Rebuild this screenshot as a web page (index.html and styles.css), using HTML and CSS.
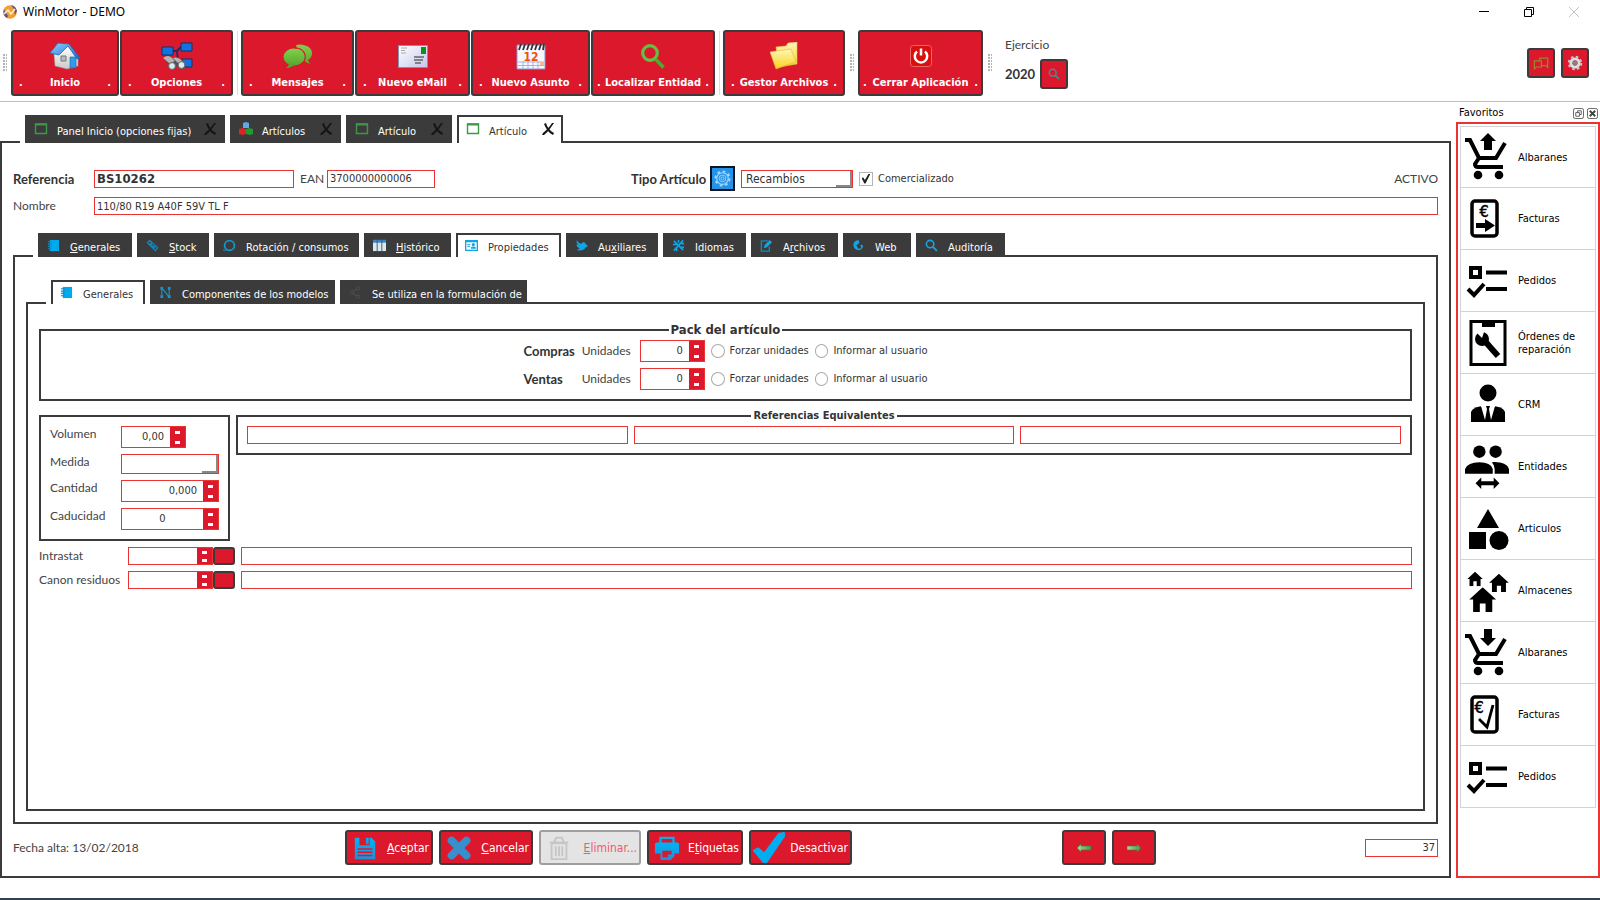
FILE: index.html
```html
<!DOCTYPE html>
<html lang="es">
<head>
<meta charset="utf-8">
<title>WinMotor - DEMO</title>
<link rel="stylesheet" href="styles.css">
</head>
<body>
<svg class="sprite" aria-hidden="true">
  <defs>
    <linearGradient id="g-roof" x1="0" y1="0" x2="1" y2="1"><stop offset="0" stop-color="#8fd0ff"/><stop offset="1" stop-color="#1567c4"/></linearGradient>
    <linearGradient id="g-wall" x1="0" y1="0" x2="0" y2="1"><stop offset="0" stop-color="#ffffff"/><stop offset="1" stop-color="#c9c9c9"/></linearGradient>
    <linearGradient id="g-green" x1="0" y1="0" x2="0" y2="1"><stop offset="0" stop-color="#83cf4c"/><stop offset="1" stop-color="#55a82f"/></linearGradient>
    <linearGradient id="g-folder" x1="0" y1="0" x2="0" y2="1"><stop offset="0" stop-color="#fff6b8"/><stop offset="1" stop-color="#fbd21c"/></linearGradient>
    <linearGradient id="g-mail" x1="0" y1="0" x2="1" y2="1"><stop offset="0" stop-color="#ffffff"/><stop offset="1" stop-color="#c3c6ec"/></linearGradient>
    <linearGradient id="g-blue" x1="0" y1="0" x2="0" y2="1"><stop offset="0" stop-color="#00b4f5"/><stop offset="1" stop-color="#1f8fd8"/></linearGradient>
    <linearGradient id="g-arrow" x1="0" y1="0" x2="1" y2="0"><stop offset="0" stop-color="#a6dc9c"/><stop offset="1" stop-color="#4a9440"/></linearGradient>
    <symbol id="i-window" viewBox="0 0 14 14"><path d="M1.500 2h11v9.500h-11z" fill="none" stroke="#3f9646" stroke-width="1.400"/><path d="M1 1.500h12v2H1z" fill="#3f9646"/></symbol>
    <symbol id="i-x" viewBox="0 0 14 14"><path d="M1 13l1-2C6 8 9 4 11 1h2C10 5 7 10 3 13zM3 2l2-1c1 4 4 8 8 10l-1 2C8 11 5 7 3 2z" fill="#151515"/></symbol>
    <symbol id="i-book" viewBox="0 0 14 14"><path d="M3 1h10v12H3z" fill="#00a8ec"/><path d="M1 3h4M1 5.500h4M1 8h4M1 10.500h4" stroke="#1389bd" stroke-width="1.200"/></symbol>
    <symbol id="i-search" viewBox="0 0 14 14"><circle cx="5.500" cy="5.500" r="4" fill="none" stroke="currentColor" stroke-width="1.700"/><path d="M8.500 8.500l4.300 4.300" stroke="currentColor" stroke-width="2"/></symbol>
    <symbol id="i-cart" viewBox="0 0 44 48"><path d="M0 7h5l9 18h17l9-15" fill="none" stroke="#000" stroke-width="4"/><path d="M14 25l-4 6q0 3 3 3h25" fill="none" stroke="#000" stroke-width="4"/><circle cx="13" cy="42" r="4.300"/><circle cx="34" cy="42" r="4.300"/></symbol>
    <symbol id="i-tasks" viewBox="0 0 44 48"><path d="M6 11h9v9H6z" fill="none" stroke="#000" stroke-width="4"/><path d="M21 15.500h21M21 32h21" stroke="#000" stroke-width="4"/><path d="M3 32l6 6 10-11" fill="none" stroke="#000" stroke-width="4"/></symbol>
    <symbol id="i-house" viewBox="0 0 28 26"><path d="M14 0L28 13h-4v13h-7v-9h-6v9H4V13H0z"/></symbol>
    <symbol id="i-gear" viewBox="0 0 20 20"><circle cx="10" cy="10" r="6.800" fill="none" stroke="currentColor" stroke-width="1.400"/><circle cx="10" cy="10" r="8.400" fill="none" stroke="currentColor" stroke-width="2.200" stroke-dasharray="3.300 3.297"/><circle cx="10" cy="10" r="4" fill="none" stroke="currentColor"/><circle cx="10" cy="10" r="1.800" fill="none" stroke="currentColor"/></symbol>
  </defs>
</svg>

<header class="titlebar">
  <svg class="logo" viewBox="0 0 14 14"><circle cx="7" cy="7" r="6.800" fill="#f0a02c"/><path d="M1 4q-2 6 3 9l1-2-3-5zM8 0q5 1 6 6l-2 4-1-6z" fill="#6a4f86"/><path d="M1 9l4-4 3 4 4-5" fill="none" stroke="#fff1d0" stroke-width="1.500"/></svg>
  <span class="titlebar-text">WinMotor - DEMO</span>
  <div class="winctl">
    <button aria-label="Minimizar"><svg viewBox="0 0 12 12"><path d="M1 5.500h10" stroke="#000"/></svg></button>
    <button aria-label="Restaurar"><svg viewBox="0 0 12 12"><path d="M1.500 3.500h7v7h-7zM3.500 3V1.500h7v7H9" fill="none" stroke="#000"/></svg></button>
    <button aria-label="Cerrar"><svg viewBox="0 0 12 12"><path d="M1 1l10 10M11 1L1 11" stroke="#c4c4c4"/></svg></button>
  </div>
</header>

<nav class="toolbar">
  <span class="grip"></span>
  <button class="tool w-inicio"><svg viewBox="0 0 32 28"><path d="M5 12L19 4l10 12v8l-11 3-12-3z" fill="url(#g-wall)" stroke="#999" stroke-width=".5"/><path d="M1 11L9 1l11 1 11 14-3 1L19 4l-9 9z" fill="url(#g-roof)" stroke="#1d6db8" stroke-width=".8"/><path d="M21 15h6v11h-6z" fill="#2f9bea" stroke="#1567b4" stroke-width=".6"/><path d="M12 14h5v5h-5z" fill="#bbb" stroke="#777"/></svg><span class="tool-label"><i>.</i><b>Inicio</b><i>.</i></span></button>
  <button class="tool w-opciones"><svg viewBox="0 0 32 28"><path d="M10 9h6l5-5M16 9l1 11h6" fill="none" stroke="#232a6b" stroke-width="1.800"/><path d="M1 5h11v8H1zM20 1h11v8H20zM20 17h11v8H20z" fill="#1173e0" stroke="#12306f"/><path d="M2 16q5-4 10 0l10 2q3 4 2 8-3 3-6 0l-2-2q-4 6-8 3l-1-5z" fill="#55504f"/><path d="M2 16q5-4 9 0l3 3-6 2zM12 16q5-2 9 3l-4 2z" fill="#b9b4b2"/><circle cx="11" cy="24" r="3.400" fill="#dceaf2" stroke="#666"/><circle cx="20.500" cy="23" r="3.400" fill="#dceaf2" stroke="#666"/></svg><span class="tool-label"><i>.</i><b>Opciones</b><i>.</i></span></button>
  <span class="sep"></span>
  <button class="tool w-mensajes"><svg viewBox="0 0 32 28"><path d="M20 3c6 0 10 4 10 8 0 3-1 5-4 7l2 4q-4-1-5-3l-4 1z" fill="url(#g-green)"/><path d="M14 3q4-1 8 0v5l-6 2z" fill="#7ecb49"/><ellipse cx="12" cy="15" rx="10.500" ry="8.500" fill="url(#g-green)"/><path d="M7 21q0 3-3 5 5 0 8-3z" fill="#55a82f"/><path d="M13 6c9 0 13 8 8 15" fill="none" stroke="#dc182c" stroke-width="1.200"/></svg><span class="tool-label"><i>.</i><b>Mensajes</b><i>.</i></span></button>
  <button class="tool w-email"><svg viewBox="0 0 32 28"><path d="M1.500 3.500h29v22h-29z" fill="url(#g-mail)" stroke="#888fae"/><path d="M24 5h5v7h-5z" fill="#079518"/><path d="M4 6h6M4 8.500h4M4 11h5" stroke="#aaa"/><path d="M17 15h10M17 18h9M18 21h6" stroke="#666" stroke-width="1.500"/></svg><span class="tool-label"><i>.</i><b>Nuevo eMail</b><i>.</i></span></button>
  <button class="tool w-asunto"><svg viewBox="0 0 32 28"><path d="M2 3h28v24H2z" fill="#f6f8ff" stroke="#8895cf"/><path d="M3 20h26M3 23.500h26M8 19v8M13 19v8M18 19v8M23 19v8" stroke="#a9b2e4"/><path d="M25 20h4v3h-4z" fill="#f7b98f"/><path d="M4 8l2-6M8 8l2-6M12 8l2-6M16 8l2-6M20 8l2-6M24 8l2-6M28 8l1-6" stroke="#333" stroke-width="1.800"/><text x="16" y="18.500" class="cal-num">12</text></svg><span class="tool-label"><i>.</i><b>Nuevo Asunto</b><i>.</i></span></button>
  <button class="tool w-localizar"><svg viewBox="0 0 32 28"><circle cx="13" cy="11" r="7.300" fill="none" stroke="#63c044" stroke-width="3.200"/><path d="M18.500 17l8 8.500" stroke="#55a82f" stroke-width="3.500"/></svg><span class="tool-label"><i>.</i><b>Localizar Entidad</b><i>.</i></span></button>
  <span class="sep"></span>
  <button class="tool w-gestor"><svg viewBox="0 0 32 28"><path d="M8 5l10-1 2-3 9-1v22l-18 3z" fill="url(#g-folder)" stroke="#e0c25a" stroke-width=".6"/><path d="M2 10l6-1 15-2 5 13q-10 3-20 7z" fill="url(#g-folder)" stroke="#dcb83c" stroke-width=".6"/></svg><span class="tool-label"><i>.</i><b>Gestor Archivos</b><i>.</i></span></button>
  <span class="grip"></span>
  <button class="tool w-cerrar"><svg viewBox="0 0 32 28"><rect x="5.500" y="3.500" width="21" height="21" rx="3" fill="#da0f0f" stroke="#f08c84" stroke-width=".7"/><path d="M12 9.500a6.200 6.200 0 1 0 8 0M16 6.500v7" fill="none" stroke="#fff" stroke-width="2.500"/></svg><span class="tool-label"><i>.</i><b>Cerrar Aplicación</b><i>.</i></span></button>
  <span class="grip"></span>
  <div class="ejercicio">
    <span class="lbl">Ejercicio</span>
    <div class="ejercicio-row"><b class="lbl-b">2020</b><button class="mini teal" aria-label="Buscar ejercicio"><svg viewBox="0 0 14 14"><use href="#i-search"/></svg></button></div>
  </div>
  <div class="toolbar-end">
    <button class="mini" aria-label="Ventanas"><svg class="wide" viewBox="0 0 18 16"><path d="M1.500 5.500h8v7h-6l-2 2zM7.500 5V2.500h9V13l-2-2H10" fill="none" stroke="#8f8a2b" stroke-width="1.400"/></svg></button>
    <button class="mini" aria-label="Configuración"><svg class="wide" viewBox="0 0 20 20"><circle cx="10" cy="10" r="5" fill="none" stroke="#dedede" stroke-width="4"/><circle cx="10" cy="10" r="7.800" fill="none" stroke="#c4c8ca" stroke-width="2.500" stroke-dasharray="3.300 2.826"/><circle cx="10" cy="10" r="3" fill="#a8747a" stroke="#777"/></svg></button>
  </div>
</nav>

<div class="workspace">
  <main class="main">
    <div class="tabs tabs-main" role="tablist">
      <button class="tab m1" role="tab"><svg viewBox="0 0 14 14"><use href="#i-window"/></svg><span>Panel Inicio (opciones fijas)</span><svg class="close" viewBox="0 0 14 14"><use href="#i-x"/></svg></button>
      <button class="tab m2" role="tab"><svg viewBox="0 0 14 14"><path d="M4 1l3-1 3 1v5H4z" fill="#5fa9e8"/><path d="M0 7l3-1 4 1v5l-3 1-4-1z" fill="#d92525"/><path d="M7 7l3-1 4 1v5l-3 1-4-1z" fill="#219b2b"/></svg><span>Artículos</span><svg class="close" viewBox="0 0 14 14"><use href="#i-x"/></svg></button>
      <button class="tab m3" role="tab"><svg viewBox="0 0 14 14"><use href="#i-window"/></svg><span>Artículo</span><svg class="close" viewBox="0 0 14 14"><use href="#i-x"/></svg></button>
      <button class="tab m3 active" role="tab" aria-selected="true"><svg viewBox="0 0 14 14"><use href="#i-window"/></svg><span>Artículo</span><svg class="close" viewBox="0 0 14 14"><use href="#i-x"/></svg></button>
    </div>
    <section class="frame frame-main">
      <div class="row-ref">
        <label class="lbl-b col-label" for="ref">Referencia</label>
        <input class="field ref" id="ref" value="BS10262">
        <label class="lbl ean-label" for="ean">EAN</label>
        <input class="field ean" id="ean" value="3700000000006">
        <div class="tipo">
          <label class="lbl-b" for="tipo">Tipo Artículo</label>
          <button class="gear" aria-label="Configurar tipo"><svg viewBox="0 0 20 20"><use href="#i-gear"/></svg></button>
          <select class="field combo combo-tipo" id="tipo"><option>Recambios</option></select>
          <input type="checkbox" class="check" id="com" checked><label for="com">Comercializado</label>
        </div>
        <span class="lbl activo">ACTIVO</span>
      </div>
      <div class="row-nom">
        <label class="lbl col-label" for="nom">Nombre</label>
        <input class="field grow" id="nom" value="110/80 R19 A40F 59V TL F">
      </div>

      <div class="tabs tabs-sub" role="tablist">
        <button class="tab s1" role="tab"><svg viewBox="0 0 14 14"><use href="#i-book"/></svg><span><u>G</u>enerales</span></button>
        <button class="tab s2" role="tab"><svg viewBox="0 0 14 14"><path d="M1.500 4L4 1.500l8.500 8L10 12.500zM4 4.500L9.500 10M6.500 3.800L4 6.500M10 7l-2.500 3" fill="none" stroke="#1389bd" stroke-width="1.300"/></svg><span><u>S</u>tock</span></button>
        <button class="tab s3" role="tab"><svg viewBox="0 0 14 14"><circle cx="7" cy="7" r="5.300" fill="none" stroke="#1296d0" stroke-width="1.900"/><path d="M0 12h4" stroke="#1296d0"/></svg><span>Rotación / consumos</span></button>
        <button class="tab s4" role="tab"><svg viewBox="0 0 14 14"><path d="M0 1h14v12H0z" fill="#dbe7ee"/><path d="M0 1h14v3H0z" fill="#3c86c6"/><path d="M4.500 1v12M9.500 1v12" stroke="#3b5670"/></svg><span><u>H</u>istórico</span></button>
        <button class="tab s5 active" role="tab" aria-selected="true"><svg viewBox="0 0 14 14"><path d="M.7 1.700h12.600v10.600H.7z" fill="#eefaff" stroke="#12a5e6" stroke-width="1.400"/><path d="M1 2h12v1.500H1z" fill="#12a5e6"/><path d="M2.500 6h3M2.500 8h3" stroke="#12a5e6"/><circle cx="9" cy="6" r="1.700" fill="#12a5e6"/><path d="M6.500 10.500V9q2.500-2 5 0v1.500z" fill="#12a5e6"/></svg><span>Propiedades</span></button>
        <button class="tab s6" role="tab"><svg viewBox="0 0 14 14"><path d="M2 1q2 4 5 4 1-2 3-1.500L14 8q-3 0-4 3-4 2-8 1l3-2Q2 9 1 6l3 1Q1 5 2 1z" fill="#12a5e6"/></svg><span>Au<u>x</u>iliares</span></button>
        <button class="tab s7" role="tab"><svg viewBox="0 0 14 14"><path d="M2 2l10 10M12 1.500L2 12.500M7 1v3M1 6h4M9 9h4M10 5h3M5 10v3" stroke="#12a5e6" stroke-width="1.700"/></svg><span>Idiomas</span></button>
        <button class="tab s8" role="tab"><svg viewBox="0 0 14 14"><path d="M9 2H1.500v11H10V8" fill="none" stroke="#1389bd" stroke-width="1.500"/><path d="M4 10l1-3.500L10.500 1 13 3.500 7.500 9z" fill="#12a5e6"/></svg><span>A<u>r</u>chivos</span></button>
        <button class="tab s9" role="tab"><svg viewBox="0 0 14 14"><path d="M7 1Q1 2 1.500 7q1 5 6 5 4-.500 4.500-5L9 6l1 4-3 .5L4.500 7 8 4z" fill="#12a5e6"/></svg><span>Web</span></button>
        <button class="tab s10" role="tab"><svg class="cyan" viewBox="0 0 14 14"><use href="#i-search"/></svg><span>Auditoría</span></button>
      </div>
      <section class="frame frame-sub">
        <div class="tabs tabs-sub" role="tablist">
          <button class="tab s1 active" role="tab" aria-selected="true"><svg viewBox="0 0 14 14"><use href="#i-book"/></svg><span>Generales</span></button>
          <button class="tab t2" role="tab"><svg viewBox="0 0 14 14"><path d="M3 12V2l8 10V2" fill="none" stroke="#1296d0" stroke-width="1.200"/><path d="M1.500 1h3v3h-3zM9.500 1h3v3h-3zM1.500 10h3v3h-3zM9.500 10h3v3h-3z" fill="#1296d0"/></svg><span>Componentes de los modelos</span></button>
          <button class="tab t3" role="tab"><svg viewBox="0 0 14 14"><path d="M3 7l7-5M3 7l7 5" stroke="#555" fill="none"/><circle cx="3" cy="7" r="1.600" fill="#333" stroke="#555"/><circle cx="10" cy="2.500" r="1.600" fill="#333" stroke="#555"/><circle cx="10" cy="11.500" r="1.600" fill="#333" stroke="#555"/></svg><span>Se utiliza en la formulación de</span></button>
        </div>
        <section class="frame frame-inner">
          <fieldset class="group pack">
            <legend>Pack del artículo</legend>
            <div class="pack-row">
              <b class="lbl-b">Compras</b><label class="lbl" for="uc">Unidades</label>
              <span class="spin"><input id="uc" value="0"><span class="arrows"><button aria-label="Más"></button><button aria-label="Menos"></button></span></span>
              <input type="radio" class="radio" name="c" id="c1"><label for="c1">Forzar unidades</label>
              <input type="radio" class="radio" name="c" id="c2"><label for="c2">Informar al usuario</label>
            </div>
            <div class="pack-row">
              <b class="lbl-b">Ventas</b><label class="lbl" for="uv">Unidades</label>
              <span class="spin"><input id="uv" value="0"><span class="arrows"><button aria-label="Más"></button><button aria-label="Menos"></button></span></span>
              <input type="radio" class="radio" name="v" id="v1"><label for="v1">Forzar unidades</label>
              <input type="radio" class="radio" name="v" id="v2"><label for="v2">Informar al usuario</label>
            </div>
          </fieldset>
          <div class="middle">
            <div class="group medidas">
              <label class="lbl" for="vol">Volumen</label>
              <span class="spin"><input id="vol" value="0,00"><span class="arrows"><button aria-label="Más"></button><button aria-label="Menos"></button></span></span>
              <label class="lbl" for="med">Medida</label>
              <select class="field combo" id="med"><option></option></select>
              <label class="lbl" for="can">Cantidad</label>
              <span class="spin full"><input id="can" value="0,000"><span class="arrows"><button aria-label="Más"></button><button aria-label="Menos"></button></span></span>
              <label class="lbl" for="cad">Caducidad</label>
              <span class="spin full centered"><input id="cad" value="0"><span class="arrows"><button aria-label="Más"></button><button aria-label="Menos"></button></span></span>
            </div>
            <fieldset class="group equiv">
              <legend>Referencias Equivalentes</legend>
              <div class="equiv-row">
                <input class="field" aria-label="Referencia equivalente 1">
                <input class="field" aria-label="Referencia equivalente 2">
                <input class="field" aria-label="Referencia equivalente 3">
              </div>
            </fieldset>
          </div>
          <div class="code-row">
            <label class="lbl" for="int">Intrastat</label>
            <span class="spin low"><input id="int"><span class="arrows"><button aria-label="Más"></button><button aria-label="Menos"></button></span></span>
            <button class="dot-btn" aria-label="Buscar Intrastat"><svg viewBox="0 0 4 4"><path d="M.5 3.500l3-3" stroke="#96405f"/></svg></button>
            <input class="field grow" aria-label="Descripción Intrastat">
          </div>
          <div class="code-row">
            <label class="lbl" for="cr">Canon residuos</label>
            <span class="spin low"><input id="cr"><span class="arrows"><button aria-label="Más"></button><button aria-label="Menos"></button></span></span>
            <button class="dot-btn" aria-label="Buscar canon"><svg viewBox="0 0 4 4"><path d="M.5 3.500l3-3" stroke="#96405f"/></svg></button>
            <input class="field grow" aria-label="Descripción canon">
          </div>
        </section>
      </section>

      <footer class="actions">
        <span class="lbl">Fecha alta: 13/02/2018</span>
        <div class="action-set">
          <button class="act a1"><svg viewBox="0 0 28 28"><path d="M3 3h18l4 4v19H3z" fill="url(#g-blue)"/><path d="M8 2h11v9H8z" fill="#dc182c"/><path d="M15 3h3v7h-3z" fill="url(#g-blue)"/><path d="M6 15h16M6 18.500h16M6 22h16" stroke="#dc182c" stroke-width="1.500"/></svg><span><u>A</u>ceptar</span></button>
          <button class="act a2"><svg viewBox="0 0 28 28"><path d="M6 6l16 16M22 6L6 22" stroke="#378fcc" stroke-width="8.500" stroke-linecap="round"/></svg><span><u>C</u>ancelar</span></button>
          <button class="act a3" disabled><svg viewBox="0 0 28 28"><path d="M6 9h16v17H6zM4 8h20M9 7l2-4h6l2 4" fill="none" stroke="#c6c6c6" stroke-width="2"/><path d="M10.500 12v11M14 12v11M17.500 12v11" stroke="#c6c6c6" stroke-width="2"/></svg><span><u>E</u>liminar...</span></button>
          <button class="act a4"><svg viewBox="0 0 28 28"><path d="M7 9V3h14v6" fill="none" stroke="#0fa9ec" stroke-width="2.500"/><path d="M1 10q0-2 2-2h22q2 0 2 2v10h-5v3l-4 4H7v-7H1z" fill="url(#g-blue)"/><path d="M9 17h10v4h-4v3H9z" fill="#dc182c"/></svg><span>E<u>t</u>iquetas</span></button>
          <button class="act a5"><svg class="big" viewBox="0 0 32 32"><path d="M2 19l4-2 6 5L26 3l5-1v3L14 30h-3z" fill="#00aeef" stroke="#00aeef" stroke-width="2" stroke-linejoin="round"/></svg><span>Desactivar</span></button>
        </div>
        <div class="nav-set">
          <button class="nav-btn" aria-label="Anterior"><svg viewBox="0 0 14 10"><path d="M0 5l4-4v2h10v4H4v2z" fill="url(#g-arrow)" stroke="#3e7c36" stroke-width=".6"/></svg></button>
          <button class="nav-btn" aria-label="Siguiente"><svg viewBox="0 0 14 10"><path d="M14 5l-4-4v2H0v4h10v2z" fill="url(#g-arrow)" stroke="#3e7c36" stroke-width=".6"/></svg></button>
        </div>
        <input class="field num" value="37" aria-label="Número">
      </footer>
    </section>
  </main>

  <aside class="side">
    <div class="side-head"><span>Favoritos</span>
      <button aria-label="Flotar"><svg viewBox="0 0 12 12"><rect x=".5" y=".5" width="11" height="11" rx="2" fill="none" stroke="#555"/><path d="M3 5h4v4H3zM5 5V3h4v4H7" fill="none" stroke="#555"/></svg></button>
      <button aria-label="Cerrar favoritos"><svg viewBox="0 0 12 12"><rect x=".5" y=".5" width="11" height="11" rx="2" fill="none" stroke="#555"/><path d="M3 3l6 6M9 3L3 9" stroke="#444" stroke-width="2"/></svg></button>
    </div>
    <div class="side-box">
      <a class="fav" href="#"><svg viewBox="0 0 44 48"><use href="#i-cart"/><path d="M23 0l8 8h-4v9h-8V8h-4z"/></svg><span>Albaranes</span></a>
      <a class="fav" href="#"><svg viewBox="0 0 44 48"><rect x="7" y="6" width="25" height="35" rx="3" fill="none" stroke="#000" stroke-width="3.500"/><text x="19" y="22" class="euro">€</text><path d="M11 28h9v-4l10 6.500-10 6.500v-4h-9z"/></svg><span>Facturas</span></a>
      <a class="fav" href="#"><svg viewBox="0 0 44 48"><use href="#i-tasks"/></svg><span>Pedidos</span></a>
      <a class="fav" href="#"><svg viewBox="0 0 44 48"><path d="M6 2.500h34v43H6z" fill="none" stroke="#000" stroke-width="3"/><path d="M17 3h13v5H17z"/><path d="M18 20l15 17" stroke="#000" stroke-width="6"/><circle cx="17" cy="20" r="7"/><path d="M9 11l8 8 2-6-4-4z" fill="#fff"/></svg><span>Órdenes de reparación</span></a>
      <a class="fav" href="#"><svg viewBox="0 0 44 48"><circle cx="23" cy="12" r="8.500"/><path d="M6 41V31q2-6 14-6h6q12 0 14 6v10z"/><path d="M16 25l4 14 2-11-1-3zM30 25l-4 14-2-11 1-3z" fill="#fff"/></svg><span>CRM</span></a>
      <a class="fav" href="#"><svg viewBox="0 0 46 48"><circle cx="15" cy="8" r="6.500"/><circle cx="32" cy="8" r="6.500"/><path d="M0 31v-5q3-7 15-7t14 7v5zM31 31v-5q0-4-3-7 15-1 18 7v5z"/><path d="M11 41l6-6v4h13v-4l6 6-6 6v-4H17v4z"/></svg><span>Entidades</span></a>
      <a class="fav" href="#"><svg viewBox="0 0 44 48"><path d="M23 4l11 19H12zM4 27h17v17H4z"/><circle cx="34" cy="35.500" r="9.500"/></svg><span>Articulos</span></a>
      <a class="fav" href="#"><svg viewBox="0 0 46 48"><use href="#i-house" x="2" y="4" width="17" height="15"/><use href="#i-house" x="25" y="6" width="21" height="19"/><use href="#i-house" x="4" y="20" width="29" height="26"/></svg><span>Almacenes</span></a>
      <a class="fav" href="#"><svg viewBox="0 0 44 48"><use href="#i-cart"/><path d="M23 17l8-8h-4V0h-8v9h-4z"/></svg><span>Albaranes</span></a>
      <a class="fav" href="#"><svg viewBox="0 0 44 48"><rect x="7" y="6" width="25" height="35" rx="3" fill="none" stroke="#000" stroke-width="3.500"/><text x="14" y="22" class="euro">€</text><path d="M14 28l8 8 6-22" fill="none" stroke="#000" stroke-width="2.800"/></svg><span>Facturas</span></a>
      <a class="fav" href="#"><svg viewBox="0 0 44 48"><use href="#i-tasks"/></svg><span>Pedidos</span></a>
    </div>
  </aside>
</div>
<div class="taskbar"></div>
</body>
</html>
```
FILE: styles.css
```css
* { box-sizing: border-box; }
:root {
  --dark: #3b3b3b;
  --red: #dc182c;
  --line: #ea3434;
  --tahoma: "DejaVu Sans Condensed", "Noto Sans", sans-serif;
  --gothic: Lato, "Open Sans", sans-serif;
}
body {
  margin: 0;
  min-height: 100vh;
  display: flex;
  flex-direction: column;
  background: #fff;
  color: #333;
  font: 11px/14px var(--tahoma);
}
button, input, select { font: inherit; color: inherit; margin: 0; padding: 0; border: 0; background: none; }
.sprite { position: absolute; width: 0; height: 0; }
.lbl { font: 12px/14px var(--gothic); color: #444; }
.lbl-b { font: bold 13px/14px var(--gothic); color: #333; }

.titlebar { display: flex; align-items: center; height: 23px; padding-left: 3px; margin-bottom: 1px; color: #000; }
.logo { width: 14px; height: 14px; margin-right: 6px; }
.titlebar-text { font: 12px/16px "Noto Sans", sans-serif; flex: 1; }
.winctl { display: flex; gap: 33px; padding-right: 20px; }
.winctl svg { width: 12px; height: 12px; display: block; }

.toolbar { display: flex; align-items: center; height: 78px; padding: 0 11px 0 3px; border-bottom: 1px solid #bcbcbc; }
.grip { width: 4px; height: 17px; background: radial-gradient(circle at 1px 1px, #b5b5b5 1px, transparent 1px) 0 0 / 3px 3px; margin-right: 4px; }
.sep { width: 1px; height: 64px; background: #ddd; margin: 0 3px; }
.tool {
  display: flex; flex-direction: column; align-items: center; justify-content: space-between;
  height: 66px; margin-right: 1px; padding: 10px 6px 4px;
  background: var(--red); border: 2px solid var(--dark); border-radius: 3px; color: #fff;
}
.tool svg { width: 32px; height: 28px; }
.tool-label { width: 100%; display: flex; justify-content: space-between; font: bold 11px/14px var(--tahoma); white-space: nowrap; }
.tool-label i { font-style: normal; }
.w-inicio { width: 108px; } .w-opciones { width: 113px; } .w-mensajes { width: 113px; }
.w-email { width: 115px; } .w-asunto { width: 119px; } .w-localizar { width: 124px; padding-inline: 4px; }
.w-gestor { width: 122px; margin-right: 5px; } .w-cerrar { width: 125px; margin-right: 5px; padding-inline: 3px; }
.cal-num { font: bold 12px var(--tahoma); fill: #f0500a; text-anchor: middle; }
.ejercicio { display: flex; flex-direction: column; padding-left: 9px; gap: 7px; height: 50px; }
.ejercicio-row { display: flex; align-items: center; gap: 5px; }
.ejercicio .lbl-b { min-width: 28px; }
.mini {
  width: 28px; height: 30px; display: grid; place-items: center;
  background: var(--red); border: 2px solid var(--dark); border-radius: 3px;
}
.mini svg { width: 12px; height: 12px; }
.mini svg.wide { width: 16px; height: 16px; }
.teal { color: #3c8f9c; }
.toolbar-end { margin-left: auto; display: flex; gap: 6px; }

.workspace { flex: 1; display: flex; gap: 5px; padding-bottom: 20px; }
.main { flex: 1; display: flex; flex-direction: column; padding-top: 13px; min-width: 0; }
.frame { border: 2px solid var(--dark); display: flex; flex-direction: column; flex: 1; }
.tabs { display: flex; gap: 5px; align-self: flex-start; margin: 0 0 -2px 20px; padding-left: 5px; background: #fff; position: relative; }
.tab {
  display: flex; align-items: center; height: 24px; padding: 3px 6px 0 7px;
  background: var(--dark); border: 2px solid var(--dark); border-bottom: 0; color: #fff; white-space: nowrap;
}
.tab.active { background: #fff; color: #333; }
.tab svg { width: 14px; height: 14px; margin: -5px 9px 0 0; flex: none; }
.tab .close { margin: -5px 0 0 auto; }
.tabs-main .tab { height: 28px; }
.tabs-sub .tab svg { width: 13px; height: 13px; margin-right: 10px; }
.m1 { width: 200px; } .m2 { width: 111px; } .m3 { width: 106px; }
.s1 { width: 94px; } .s2 { width: 72px; } .s3 { width: 145px; } .s4 { width: 87px; } .s5 { width: 105px; }
.s6 { width: 92px; } .s7 { width: 83px; } .s8 { width: 87px; } .s9 { width: 68px; } .s10 { width: 89px; }
.t2 { width: 185px; } .t3 { width: 187px; }
.cyan { color: #12a5e6; }

.frame-main { padding: 23px 11px 0; }
.field { height: 18px; border: 1px solid var(--line); padding: 0 2px; background: #fff; min-width: 0; border-radius: 0; }
.grow { flex: 1; }
.row-ref { display: flex; align-items: center; height: 25px; }
.col-label { width: 81px; }
.ref { width: 200px; margin-right: 6px; font: bold 13px/16px var(--tahoma); }
.ean-label { width: 27px; }
.ean { width: 108px; }
.tipo { display: flex; align-items: center; margin-left: 196px; }
.tipo .lbl-b { width: 79px; white-space: nowrap; }
.gear { width: 25px; height: 25px; margin-right: 6px; display: grid; place-items: center; background: #2392e8; border: 2px solid #0b1622; color: #a4d6fb; }
.gear svg { width: 17px; height: 17px; }
.combo { appearance: none; background: linear-gradient(#888, #888) 100% 100% / 2px 100% no-repeat, linear-gradient(#888, #888) 100% 100% / 16px 2px no-repeat, #fff; }
.combo-tipo { width: 112px; margin-right: 6px; padding: 0 4px; font-size: 12px; }
.check { appearance: none; width: 14px; height: 14px; margin-right: 5px; border: 1px solid #b5b5b5; display: grid; place-items: center; }
.check:checked::after { content: ""; width: 9px; height: 10px; background: #222; clip-path: polygon(0 45%, 20% 40%, 38% 65%, 80% 0, 100% 0, 45% 100%, 32% 100%); }
.activo { margin-left: auto; }
.row-nom { display: flex; align-items: center; margin: 6px 0 18px; }

.frame-sub { padding: 23px 11px 11px; }
.frame-inner { padding: 17px 11px 0; }
.group { border: 2px solid var(--dark); margin: 0; min-width: 0; }
legend { margin: 0 auto; padding: 0 2px; font-weight: bold; }
.pack { height: 80px; padding: 0; display: flex; flex-direction: column; align-items: center; }
.pack legend { font-size: 13px; line-height: 18px; }
.pack-row { display: flex; align-items: center; height: 22px; margin: 1px 0 5px; width: 404px; }
.pack .lbl-b { width: 59px; } .pack .lbl { width: 59px; }
.spin { display: flex; width: 65px; height: 22px; border: 1px solid var(--line); }
.spin input { flex: 1; min-width: 0; text-align: right; padding-right: 6px; }
.spin.full { width: 98px; }
.spin.centered input { text-align: center; padding: 0; }
.arrows { width: 15px; background: var(--red); display: flex; flex-direction: column; justify-content: space-around; align-items: center; }
.arrows button { width: 5px; height: 3px; background: #fff; }
.radio { appearance: none; width: 14px; height: 14px; margin: 0 5px 0 6px; border: 1px solid #aaa; border-radius: 50%; }
.radio + label { width: 79px; white-space: nowrap; }
.radio + label:last-child { width: auto; }
.middle { display: flex; align-items: flex-start; gap: 6px; margin-top: 7px; }
.medidas { width: 191px; margin-top: 7px; padding: 9px; display: grid; grid-template-columns: 71px 98px; row-gap: 6px; }
.medidas .lbl { padding-top: 1px; }
.medidas .combo { height: 20px; }
.equiv { flex: 1; padding: 0 9px; height: 47px; }
.equiv legend { font-size: 11px; line-height: 16px; }
.equiv-row { display: flex; gap: 6px; padding-top: 2px; }
.equiv-row .field { flex: 1; }
.code-row { display: flex; align-items: center; margin-top: 6px; }
.code-row .lbl { width: 89px; white-space: nowrap; }
.spin.low { width: 85px; height: 18px; }
.dot-btn { width: 22px; height: 18px; margin-right: 6px; display: grid; place-items: center; background: var(--red); border: 2px solid var(--dark); border-radius: 3px; }
.dot-btn svg { width: 4px; height: 4px; }

.actions { display: grid; grid-template-columns: 332px 507px 1fr auto; align-items: center; height: 52px; padding-bottom: 5px; }
.action-set { display: flex; gap: 6px; }
.act {
  display: flex; align-items: center; justify-content: space-between; height: 35px; padding: 0 2px 0 5px;
  background: var(--red); border: 2px solid var(--dark); border-radius: 3px; color: #fff; font-size: 12px; white-space: nowrap;
}
.act svg { width: 26px; height: 26px; }
.act svg.big { width: 33px; height: 33px; margin-left: -4px; }
.act:disabled { background: #e4e4e4; border-color: #9f9f9f; color: #f2596c; }
.a1 { width: 88px; } .a2 { width: 94px; } .a3 { width: 102px; } .a4 { width: 96px; } .a5 { width: 103px; }
.nav-set { display: flex; gap: 6px; margin-left: 210px; }
.nav-btn { width: 44px; height: 35px; background: var(--red); border: 2px solid var(--dark); border-radius: 3px; display: grid; place-items: center; }
.nav-btn svg { width: 14px; height: 10px; }
.num { width: 73px; text-align: right; }

.side { width: 144px; display: flex; flex-direction: column; color: #000; }
.side-head { display: flex; align-items: center; height: 20px; gap: 3px; padding: 2px 2px 0 3px; }
.side-head span { flex: 1; }
.side-head svg { width: 11px; height: 11px; display: block; }
.side-box { flex: 1; border: 2px solid var(--line); padding: 2px; }
.fav { display: flex; align-items: center; height: 62px; padding: 0 6px 0 4px; gap: 9px; border: 1px solid #d2d2d2; border-top: 0; color: #000; text-decoration: none; line-height: 13px; }
.fav:first-child { border-top: 1px solid #d2d2d2; }
.fav svg { width: 44px; height: 48px; flex: none; }
.euro { font: 16px var(--tahoma); text-anchor: middle; stroke: #000; stroke-width: 0.5; }
.taskbar { height: 2px; background: #2f4254; }
```
